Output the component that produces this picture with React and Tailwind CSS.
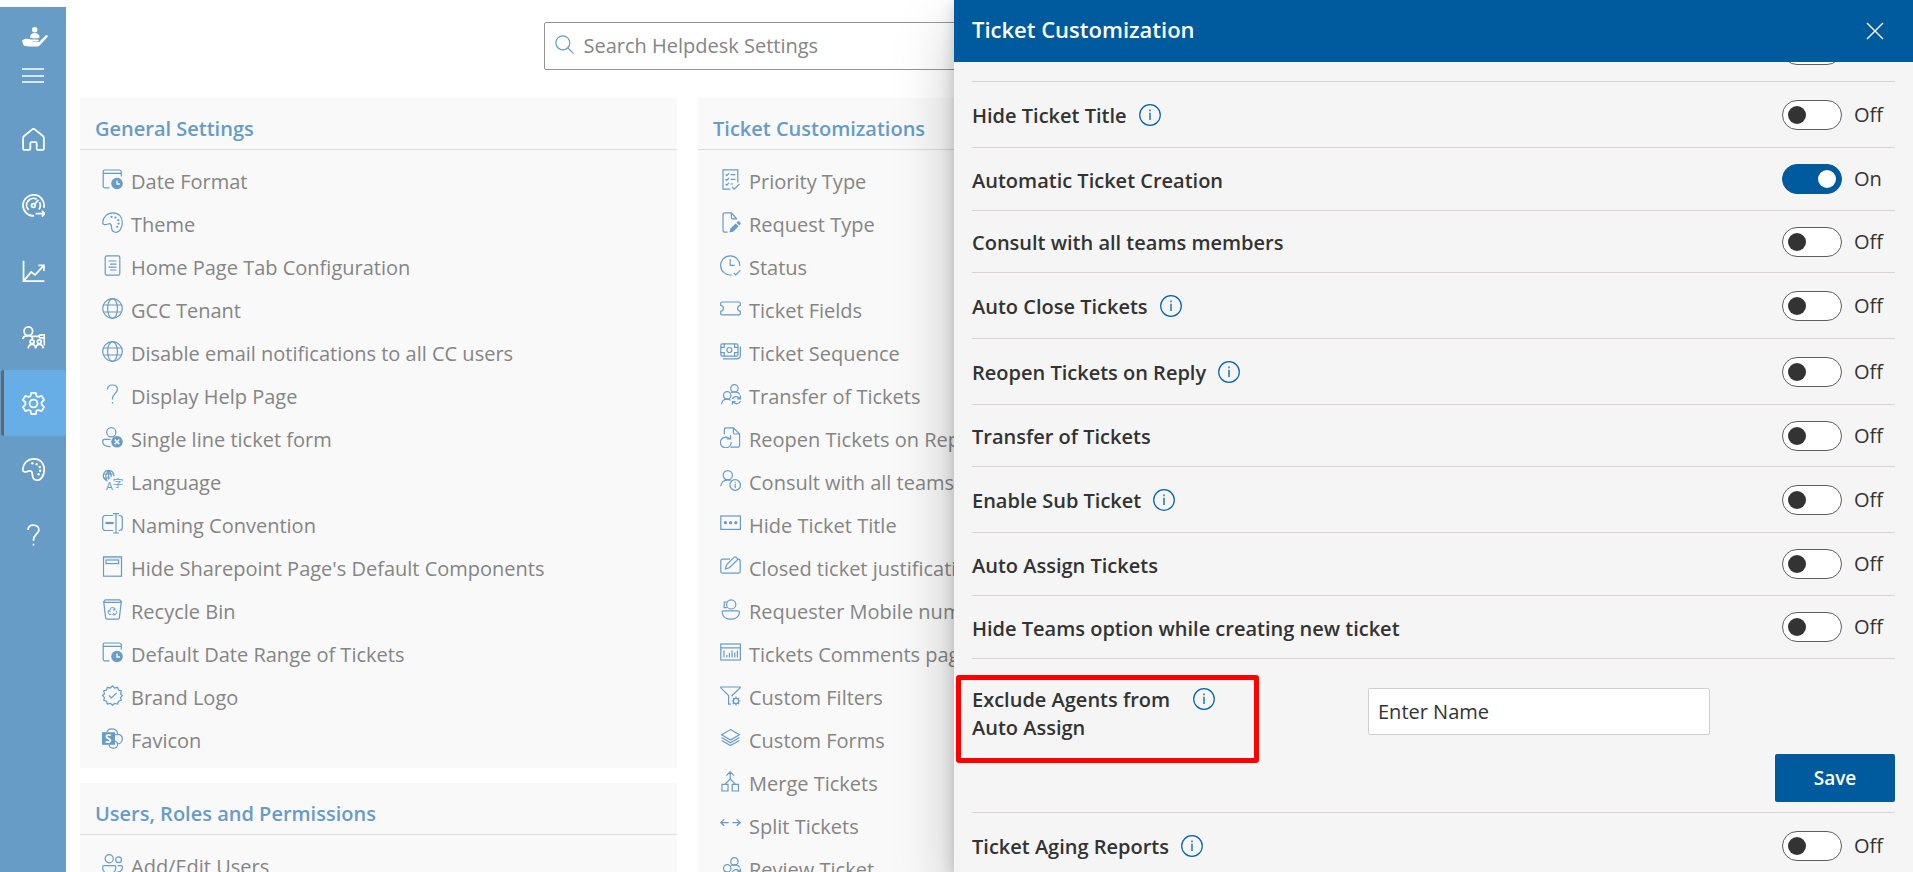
import React from "react";

const seal =
  "M10.5 0.8 L12.6 3 L15.6 2.3 L16.5 5 L19.3 6 L18.5 8.8 L20.4 10.5 L18.5 12.7 L19.3 15.2 L16.5 16.3 L15.6 19 L12.6 18.3 L10.5 20.3 L8.4 18.3 L5.4 19 L4.5 16.3 L1.7 15.2 L2.5 12.7 L0.6 10.5 L2.5 8.8 L1.7 6 L4.5 5 L5.4 2.3 L8.4 3 Z";

const paletteShape =
  "M0.7 10.8 C1 5 5 0.8 11 0.8 C17 0.8 20.3 5.2 20.3 10.2 C20.3 16 17.4 20.3 14.2 20.3 C11 20.3 9.6 18 9.5 15 C9.4 12 8 11.2 6 12 C3.6 13 0.6 13 0.7 10.8 Z";

const glyphs = {
  date: (
    <>
      <path d="M7.5 18.8H2.8A1.6 1.6 0 0 1 1.2 17.2V2.6A1.6 1.6 0 0 1 2.8 1H17.4A2 2 0 0 1 19.3 3V7.5M1.2 4.4H19.3" />
      <circle cx="15" cy="14.5" r="5.8" fill="currentColor" stroke="none" />
      <path d="M15 11.6V15H18" stroke="#f9f9f9" strokeWidth="1.3" />
    </>
  ),
  palette: (
    <>
      <path d={paletteShape} />
      <g fill="currentColor" stroke="none">
        <circle cx="9.5" cy="4.8" r="1.1" />
        <circle cx="13.4" cy="5.6" r="1.1" />
        <circle cx="16.2" cy="8.2" r="1.1" />
        <circle cx="16.6" cy="11.6" r="1.1" />
        <circle cx="15.2" cy="14.8" r="1.1" />
      </g>
    </>
  ),
  doc: (
    <>
      <rect x="3.2" y="0.8" width="14.6" height="19.4" rx="1.6" />
      <path d="M6.5 6H14.5M8 9.2H14.5M6.5 12.2H14.5M8 15H14.5" />
    </>
  ),
  globe: (
    <>
      <circle cx="10.5" cy="10.5" r="9.8" />
      <ellipse cx="10.5" cy="10.5" rx="4.9" ry="9.8" />
      <path d="M1.4 7H19.6M1.4 14H19.6" />
    </>
  ),
  question: (
    <path d="M5.5 5.4C5.6 2.5 7.8 1 10.4 1C13.3 1 15.4 2.8 15.4 5.4C15.4 8.8 10.5 10 10.5 14.2V15.4M10.5 18V19.6" />
  ),
  personX: (
    <>
      <circle cx="9.3" cy="5.2" r="4.6" />
      <path d="M8.5 19.6H7C3.2 19.4 0.7 17.4 0.7 14.6C0.7 13.2 1.3 12.4 2.4 12.4H8.5" />
      <circle cx="15" cy="14.8" r="5.8" fill="currentColor" stroke="none" />
      <path d="M12.7 12.5L17.3 17.1M17.3 12.5L12.7 17.1" stroke="#f9f9f9" strokeWidth="1.5" />
    </>
  ),
  language: (
    <>
      <path d="M5.5 10.8A5.3 5.3 0 1 1 11.9 6.2M4.8 10.6C3.4 7.5 3.6 2.8 6.6 0.7C8.6 2 9.3 4.4 9.2 7M1.4 4H11.6M1.4 8H8.2M6.6 0.7V9.5" />
      <text x="4" y="19.6" fontSize="11" fontFamily="Open Sans, sans-serif" fill="currentColor" stroke="none">A</text>
      <text x="10.8" y="17.4" fontSize="10.5" fontFamily="Noto Sans CJK SC, sans-serif" fill="currentColor" stroke="none">字</text>
    </>
  ),
  rename: (
    <>
      <path d="M11.2 17.5H3.4A2.7 2.7 0 0 1 0.7 14.8V5.2A2.7 2.7 0 0 1 3.4 2.5H11.2M16.6 2.5H17.6A2.7 2.7 0 0 1 20.3 5.2V14.8A2.7 2.7 0 0 1 17.6 17.5H16.6M11 0.6H17M11 20H17M14 0.6V20" />
      <path d="M3.4 10H11.6" strokeWidth="2.2" />
    </>
  ),
  page: (
    <>
      <rect x="1.5" y="0.8" width="18" height="19.4" />
      <rect x="4" y="4" width="12.6" height="3.6" />
      <path d="M1.5 1.8H19.5" strokeOpacity="0.4" />
    </>
  ),
  bin: (
    <>
      <path d="M1.2 3.4L3.2 0.8H17.8L19.8 3.4M1.2 3.4H19.8M1.8 3.4L3.6 18.6A1.5 1.5 0 0 0 5 20.2H16A1.5 1.5 0 0 0 17.4 18.6L19.2 3.4" />
      <path d="M7.8 11.2L9.4 8.6H11.4L12.8 10.8M13.8 11.6L14.8 13.6L13.6 15.4H11.4M9.4 15.4H7.2L6.2 13.6L7 12M12.9 8.8V11H10.8M12.2 14L11 15.4L12.2 16.8M5.6 12.2L7.6 11.3L8.3 13.2" strokeWidth="1" />
    </>
  ),
  seal: (
    <>
      <path d={seal} />
      <path d="M6.8 10.4L9.4 13L14.6 7.8" />
    </>
  ),
  sharepoint: (
    <>
      <path d="M4.6 4.6C5.2 2.2 7.4 0.8 10 0.8C13.4 0.8 15.6 3 15.6 6.4M13 7C14 6.4 15 6.2 16 6.3C18.6 6.5 20.3 8.6 20.3 11C20.3 13.7 18.4 15.8 15.6 15.8M13 13C14.8 13.6 15.8 15 15.6 17C15.2 19 13.4 20.2 11.4 20.2C9 20.2 7.2 18.8 7 16.8" />
      <rect x="0" y="4.2" width="13" height="12.6" fill="currentColor" stroke="none" />
      <text x="3.1" y="14.6" fontSize="11.5" fontWeight="700" fontFamily="Open Sans, sans-serif" fill="#f9f9f9" stroke="none">S</text>
    </>
  ),
  users: (
    <>
      <circle cx="7.2" cy="4.8" r="4.1" />
      <circle cx="16.6" cy="5.8" r="2.9" />
      <path d="M2.2 11.6H12.2C13.2 11.6 13.8 12.3 13.8 13.4C13.8 17 11.2 19.8 7.2 19.8C3.2 19.8 0.6 17 0.6 13.4C0.6 12.3 1.2 11.6 2.2 11.6ZM15.6 11.6H18.8C19.8 11.6 20.4 12.2 20.4 13.2C20.4 16.2 18.2 18.4 14.8 18.2" />
    </>
  ),
  checklist: (
    <>
      <path d="M10.4 20.2H3V0.8H17.8V13.6M12 18L14.2 20.2L19.6 14.8" />
      <path d="M5.6 5.4L6.8 6.6L9 4.2M5.6 10.2L6.8 11.4L9 9M5.6 15L6.8 16.2L9 13.8M10.6 5.6H15.4M10.6 10.4H15.4M10.6 15H13" />
    </>
  ),
  pageEdit: (
    <>
      <path d="M7.6 20.2H4.6A1.6 1.6 0 0 1 3 18.6V2.4A1.6 1.6 0 0 1 4.6 0.8H11.4L16.8 7M11.4 0.8V5.8A1 1 0 0 0 12.4 6.8H16.8" />
      <path d="M9.4 20.4L10.4 16.6L15.6 11.4L18.6 14.2L13.4 19.4Z M16.4 10.6L17.8 9.4A1 1 0 0 1 19.2 9.4L20.4 10.8A1 1 0 0 1 20.4 12.2L19.4 13.4Z" fill="currentColor" stroke="none" />
    </>
  ),
  clock: (
    <>
      <path d="M11.6 19.9A9.6 9.6 0 1 1 19.8 11M10.2 4V10.4H14.8M13.8 18L15.8 20L20.4 15.4" />
    </>
  ),
  ticket: (
    <path d="M2 4H19A1.3 1.3 0 0 1 20.3 5.3V7.4C18.6 7.8 17.6 9 17.6 10.4C17.6 11.8 18.6 13 20.3 13.4V15.5A1.3 1.3 0 0 1 19 16.8H2A1.3 1.3 0 0 1 0.7 15.5V13.4C2.4 13 3.4 11.8 3.4 10.4C3.4 9 2.4 7.8 0.7 7.4V5.3A1.3 1.3 0 0 1 2 4Z" />
  ),
  money: (
    <>
      <rect x="0.8" y="2.8" width="17.2" height="12.4" rx="1.6" />
      <circle cx="9.4" cy="9" r="2.5" />
      <path d="M0.8 6.4H4.2V2.8M18 6.4H14.6V2.8M0.8 11.6H4.2V15.2M18 11.6H14.6V15.2M3 17.8H17A3.6 3.6 0 0 0 20.4 14.4V5.4" />
    </>
  ),
  peopleSync: (
    <>
      <circle cx="14.4" cy="4.4" r="3.7" />
      <circle cx="7.2" cy="11.4" r="3.7" />
      <path d="M1.6 20.2C1.8 17.2 4 15.2 7.2 15.2C8.6 15.2 9.6 15.6 10.4 16.2M11 8.6C13 7.4 18.4 7.2 19.8 10.6" />
      <path d="M12.4 15C13 12.4 17.6 11.4 19.6 14.4M20.4 11.6V14.8H17.2M20.4 17.2C19.6 20 15.4 20.8 13.2 18.2M12.4 20.6V17.6H15.6" />
    </>
  ),
  pageSync: (
    <>
      <path d="M4.4 7.2V2.4A1.6 1.6 0 0 1 6 0.8H13.4L19.6 7V18.6A1.6 1.6 0 0 1 18 20.2H10.4M13.4 0.8V5.6A1.4 1.4 0 0 0 14.8 7H19.6" />
      <path d="M9.8 11.8A5.4 5.4 0 1 0 11.2 15.2M10.6 8.2V12H6.6" />
    </>
  ),
  personInfo: (
    <>
      <circle cx="7.8" cy="5.2" r="4.6" />
      <path d="M0.7 16.2C0.9 12.4 4 9.8 7.8 9.8C9 9.8 9.8 10 10.6 10.4" />
      <circle cx="15.2" cy="15" r="5.3" />
      <path d="M15.2 13.8V18M15.2 11.8V12.8" />
    </>
  ),
  dots: (
    <>
      <rect x="0.8" y="3" width="19.6" height="13.4" />
      <g fill="currentColor" stroke="none">
        <circle cx="5.4" cy="9.7" r="1.6" />
        <circle cx="10.6" cy="9.7" r="1.6" />
        <circle cx="15.8" cy="9.7" r="1.6" />
      </g>
    </>
  ),
  edit: (
    <>
      <path d="M10 3.2H2.6A1.8 1.8 0 0 0 0.8 5V15.4A1.8 1.8 0 0 0 2.6 17.2H18.4A1.8 1.8 0 0 0 20.2 15.4V5A1.8 1.8 0 0 0 18.4 3.2H18" />
      <path d="M5.4 12.8L6.6 8.8L14 1.4A1.6 1.6 0 0 1 16.2 1.4L17 2.2A1.6 1.6 0 0 1 17 4.4L9.4 11.8Z" />
    </>
  ),
  headset: (
    <>
      <circle cx="11.2" cy="5.4" r="4.6" />
      <path d="M6.6 3H4.2V8.6H6.8M3.4 11.8H18C19 11.8 19.6 12.6 19.4 13.8C18.8 17.6 15.4 20.2 10.8 20.2C6.2 20.2 2.8 17.6 2.2 13.8C2 12.6 2.4 11.8 3.4 11.8Z" />
    </>
  ),
  chart: (
    <>
      <rect x="0.8" y="2" width="19.6" height="16" />
      <path d="M0.8 5.8H20.4M4 8.4V15.6M6.8 13V15.6M9.4 11V15.6M12 8.4V15.6M14.8 10.4V15.6M17.4 8.4V15.6" />
    </>
  ),
  filter: (
    <>
      <path d="M11 19.2H8.6V10.6L0.8 2.8V2H20.2V2.8L12.2 10.6V11.6" />
      <circle cx="16" cy="16" r="2.6" />
      <path d="M16 11.6V13.2M16 18.8V20.4M11.6 16H13.2M18.8 16H20.4M12.9 12.9L14 14M18 18L19.1 19.1M19.1 12.9L18 14M14 18L12.9 19.1" />
    </>
  ),
  layers: (
    <path d="M10.5 1.6L19.4 6.8L10.5 12L1.6 6.8ZM1.6 9.6L10.5 14.8L19.4 9.6M1.6 12.4L10.5 17.6L19.4 12.4" />
  ),
  merge: (
    <path d="M2 13.4H8V20H2ZM12.2 13.4H18.4V20H12.2ZM5 13.2L10.2 8V1M15.4 13.2L10.2 8M6.4 4.6L10.2 0.8L14 4.6" />
  ),
  split: <path d="M0.9 8.6H8.6M4.2 5.4L0.9 8.6L4.2 11.8M12.4 8.6H20.1M16.8 5.4L20.1 8.6L16.8 11.8" strokeWidth="1.3" />,
  home: (
    <path d="M1 9.2C1 8.4 1.3 7.8 1.9 7.3L9.4 1.2A1.7 1.7 0 0 1 11.6 1.2L19.1 7.3C19.7 7.8 20 8.4 20 9.2V18.4A1.6 1.6 0 0 1 18.4 20H14.6A1.2 1.2 0 0 1 13.4 18.8V14A1 1 0 0 0 12.4 13H8.6A1 1 0 0 0 7.6 14V18.8A1.2 1.2 0 0 1 6.4 20H2.6A1.6 1.6 0 0 1 1 18.4Z" />
  ),
  gauge: (
    <>
      <path d="M11 20A9.6 9.6 0 1 1 19.9 12.6M6 14.6A6.2 6.2 0 0 1 13.4 4.8M15.9 7.4A6.2 6.2 0 0 1 15.4 14.2" />
      <circle cx="10.4" cy="10.4" r="1.7" />
      <path d="M11.6 9.2L15 5.2M12.4 18H20.6M18.2 15.4L20.8 18L18.2 20.6" />
    </>
  ),
  trend: <path d="M1.4 0.6V19.4H20.4M2 18.6L8.4 11L12 13.6L19.6 5.4M15 5H20V10" />,
  peopleBoard: (
    <>
      <circle cx="5.8" cy="4.8" r="3.9" />
      <path d="M0.7 12C0.9 9.9 3 8.7 5.8 8.7C7.6 8.7 9 9.3 9.6 10.6M9.4 12V9.4H15L16.6 8.2H20.4V17.8M15 9.4L16.4 10.8H20.4" />
      <circle cx="9.2" cy="14.4" r="1.8" />
      <circle cx="15.8" cy="14.4" r="1.8" />
      <path d="M5.6 20.4C6 17.8 7.4 16.8 9.2 16.8C11 16.8 12.2 17.8 12.5 20.4C12.8 17.8 14 16.8 15.8 16.8C17.6 16.8 19 17.8 19.4 20.4" />
    </>
  ),
  gear: (
    <>
      <path d="M8.4 0.9H12.6L13.3 3.9L14.8 4.6L17.9 3.6L20.2 7.2L17.9 9.5V11.5L20.2 13.8L17.9 17.4L14.8 16.4L13.3 17.1L12.6 20.1H8.4L7.7 17.1L6.2 16.4L3.1 17.4L0.8 13.8L3.1 11.5V9.5L0.8 7.2L3.1 3.6L6.2 4.6L7.7 3.9Z" strokeLinejoin="round" />
      <circle cx="10.5" cy="10.5" r="3.6" />
    </>
  ),
};

function Icon({ name, nav }) {
  return (
    <svg
      viewBox="0 0 21 21"
      aria-hidden="true"
      className={nav ? "size-[23px] shrink-0" : "mb-1 size-[21px] shrink-0"}
      fill="none"
      stroke="currentColor"
      strokeWidth={nav ? 1.6 : 1.2}
    >
      {glyphs[name]}
    </svg>
  );
}

const navItems = [
  ["home", "Home"],
  ["gauge", "Dashboard"],
  ["trend", "Reports"],
  ["peopleBoard", "Teams"],
  ["gear", "Settings"],
  ["palette", "Appearance"],
  ["question", "Help"],
];

const general = [
  ["date", "Date Format"],
  ["palette", "Theme"],
  ["doc", "Home Page Tab Configuration"],
  ["globe", "GCC Tenant"],
  ["globe", "Disable email notifications to all CC users"],
  ["question", "Display Help Page"],
  ["personX", "Single line ticket form"],
  ["language", "Language"],
  ["rename", "Naming Convention"],
  ["page", "Hide Sharepoint Page's Default Components"],
  ["bin", "Recycle Bin"],
  ["date", "Default Date Range of Tickets"],
  ["seal", "Brand Logo"],
  ["sharepoint", "Favicon"],
];

const tickets = [
  ["checklist", "Priority Type"],
  ["pageEdit", "Request Type"],
  ["clock", "Status"],
  ["ticket", "Ticket Fields"],
  ["money", "Ticket Sequence"],
  ["peopleSync", "Transfer of Tickets"],
  ["pageSync", "Reopen Tickets on Reply"],
  ["personInfo", "Consult with all teams members"],
  ["dots", "Hide Ticket Title"],
  ["edit", "Closed ticket justification"],
  ["headset", "Requester Mobile number"],
  ["chart", "Tickets Comments page"],
  ["filter", "Custom Filters"],
  ["layers", "Custom Forms"],
  ["merge", "Merge Tickets"],
  ["split", "Split Tickets"],
  ["peopleSync", "Review Ticket"],
];

const options = [
  { label: "Hide Ticket Title", info: true, size: "h-[66px]" },
  { label: "Automatic Ticket Creation", on: true, size: "h-[63px]" },
  { label: "Consult with all teams members", size: "h-[62px]" },
  { label: "Auto Close Tickets", info: true, size: "h-[66px]" },
  { label: "Reopen Tickets on Reply", info: true, size: "h-[66px]" },
  { label: "Transfer of Tickets", size: "h-[62px]" },
  { label: "Enable Sub Ticket", info: true, size: "h-[66px]" },
  { label: "Auto Assign Tickets", size: "h-[63px]" },
  { label: "Hide Teams option while creating new ticket", size: "h-[63px]" },
];

function Card({ title, items }) {
  return (
    <section className="bg-[#f9f9f9]">
      <h2 className="flex h-[52px] items-end border-b border-[#dcdcdc] px-[15px] pb-1.5 text-xl leading-7 font-semibold text-[#669cc5]">
        {title}
      </h2>
      <ul className="pt-[10px] pb-1.5">
        {items.map(([icon, label]) => (
          <li key={label}>
            <a href="#" className="flex h-[43px] items-center gap-2 px-[22px] text-xl whitespace-nowrap text-[#858585]">
              <span className="text-[#669cc5]">
                <Icon name={icon} />
              </span>
              {label}
            </a>
          </li>
        ))}
      </ul>
    </section>
  );
}

function Toggle({ label, on }) {
  return (
    <label className="flex w-[113px] shrink-0 items-center gap-3 text-xl text-[#333]">
      <input
        type="checkbox"
        role="switch"
        aria-label={label}
        defaultChecked={on}
        className="h-[30px] w-[60px] shrink-0 appearance-none rounded-full border border-[#605e5c] bg-white p-[5px] before:block before:size-[18px] before:rounded-full before:bg-[#333] checked:border-[#005a9e] checked:bg-[#005a9e] checked:before:ml-auto checked:before:bg-white"
      />
      {on ? "On" : "Off"}
    </label>
  );
}

function Info({ label }) {
  return (
    <button type="button" aria-label={"About " + label} className="shrink-0 text-[#0063ad]">
      <svg viewBox="0 0 22 22" className="size-[22px]" fill="none" stroke="currentColor" strokeWidth="1.2" aria-hidden="true">
        <circle cx="11" cy="11" r="10.3" />
        <path d="M11 8.8V16M11 5.6V7.2" strokeWidth="1.3" />
      </svg>
    </button>
  );
}

function OptionRow({ label, info, on, size }) {
  return (
    <div className={"flex items-center justify-between border-b border-[#d8d2d4] " + size}>
      <div className="flex items-center gap-3 text-xl font-semibold text-[#333]">
        <span className="pt-[3px]">{label}</span>
        {info && <Info label={label} />}
      </div>
      <Toggle label={label} on={on} />
    </div>
  );
}

export default function App() {
  return (
    <div className="relative flex h-screen overflow-hidden bg-white pt-[7px] font-['Open_Sans','Noto_Sans',sans-serif]">
      <nav className="w-[66px] shrink-0 bg-[#669cc5] text-white">
        <a href="#" aria-label="Helpdesk" className="flex justify-center pt-5">
          <svg viewBox="0 0 26 20" className="ml-1 h-5 w-[26px]" fill="currentColor" aria-hidden="true">
            <circle cx="12.7" cy="2.8" r="2.7" />
            <path d="M8 10.6C8 7.6 10 6 12.7 6C15.4 6 17.6 7.6 17.6 10.6C15 11.8 10.6 11.8 8 10.6Z" />
            <path d="M0 13.6L2.6 12C5 11.4 7 12 9 12.6H15.8C17 12.6 17.2 14.2 16 14.4H10.4V15H16.8C17.8 15 18.4 14.4 18.6 13.6L23.6 8.6C24.6 8 26 8.4 25.8 9.4L18.6 17.4C17.6 18.6 16.4 19.6 14.8 19.6H7C5.6 19.4 4.4 18.8 3 19.2L1.4 18Z" />
          </svg>
        </a>
        <button type="button" aria-label="Toggle menu" className="mx-auto mt-5 block text-white">
          <svg viewBox="0 0 22 17" className="h-[17px] w-[22px]" stroke="currentColor" strokeWidth="1.5" aria-hidden="true">
            <path d="M0 2H22M0 9H22M0 15H22" />
          </svg>
        </button>
        <ul className="pt-[22px]">
          {navItems.map(([icon, label]) => (
            <li key={label}>
              <a
                href="#"
                aria-label={label}
                className={
                  "flex h-[66px] items-center justify-center " +
                  (icon === "gear" ? "ml-px rounded-[3px] border-l-3 border-[#666] bg-[#66aee5] pr-1" : "")
                }
              >
                <Icon name={icon} nav />
              </a>
            </li>
          ))}
        </ul>
      </nav>

      <main className="min-w-0 flex-1 pl-3.5">
        <label className="mx-auto mt-[15px] flex h-12 w-[906px] items-center gap-[10px] rounded-xs border border-[#979593] px-[10px]">
          <svg viewBox="0 0 19 19" className="mb-1 size-[19px] shrink-0 text-[#669cc5]" fill="none" stroke="currentColor" strokeWidth="1.2" aria-hidden="true">
            <circle cx="7.8" cy="7.8" r="7" />
            <path d="M12.8 12.8L18.4 18.4" />
          </svg>
          <input
            type="text"
            aria-label="Search settings"
            placeholder="Search Helpdesk Settings"
            className="min-w-0 flex-1 text-xl outline-none placeholder:text-[#858585]"
          />
        </label>
        <div className="mt-7 grid grid-cols-3 items-start gap-[21px]">
          <div className="flex flex-col gap-[15px]">
            <Card title="General Settings" items={general} />
            <Card title="Users, Roles and Permissions" items={[["users", "Add/Edit Users"]]} />
          </div>
          <Card title="Ticket Customizations" items={tickets} />
        </div>
      </main>

      <aside className="absolute inset-y-0 right-0 flex w-[959px] flex-col bg-[#f5f5f5] shadow-[0_26px_58px_rgba(0,0,0,0.22),0_5px_14px_rgba(0,0,0,0.18)]">
        <header className="flex h-[62px] shrink-0 items-center justify-between bg-[#005a9e] pr-[29px] pl-[18px] text-white">
          <h1 className="pb-1 text-[22px] font-semibold">Ticket Customization</h1>
          <button type="button" aria-label="Close">
            <svg viewBox="0 0 18 18" className="size-[18px]" fill="none" stroke="currentColor" strokeWidth="1.4" aria-hidden="true">
              <path d="M1 1L17 17M17 1L1 17" />
            </svg>
          </button>
        </header>
        <div className="min-h-0 flex-1 overflow-hidden px-[18px]">
          <div className="flex h-5 items-end justify-end overflow-hidden border-b border-[#d2d5d6] pb-4">
            <Toggle label="Previous option" />
          </div>
          {options.map((option) => (
            <OptionRow key={option.label} {...option} />
          ))}
          <div className="relative flex flex-col border-b border-[#d8d2d4] pt-[29px] pb-[10px]">
            <div className="flex items-start">
              <div className="flex w-[396px] items-start gap-5">
                <label htmlFor="exclude" className="-mt-0.5 w-[201px] text-xl leading-7 font-semibold text-[#333]">
                  Exclude Agents from Auto Assign
                </label>
                <Info label="Exclude Agents from Auto Assign" />
              </div>
              <input
                id="exclude"
                type="text"
                placeholder="Enter Name"
                className="h-[47px] w-[342px] rounded-xs border border-[#d0d0d0] bg-white px-[9px] text-xl outline-none placeholder:text-[#333]"
              />
            </div>
            <button type="button" className="mt-3 h-12 w-[120px] self-end rounded-xs bg-[#005a9e] text-[19px] font-semibold text-white">
              Save
            </button>
            <div className="pointer-events-none absolute top-4 -left-4 h-[88px] w-[303px] rounded-[3px] border-5 border-[#ff0000]" />
          </div>
          <OptionRow label="Ticket Aging Reports" info size="h-[66px]" />
        </div>
      </aside>
    </div>
  );
}
